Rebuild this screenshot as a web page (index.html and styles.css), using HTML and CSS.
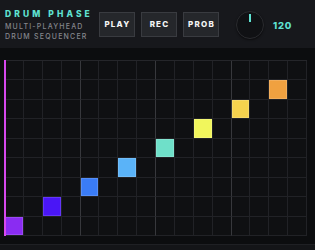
FILE: index.html
```html
<!DOCTYPE html>
<html>
  <head>
    <meta charset="utf-8" />
    <title>Drum Phase – Multi-playhead drum sequencer</title>
    <link rel="stylesheet" href="styles.css">
  </head>

  <body>
    <header class="topbar">
      <div class="brand">
        <h1 class="brand-title">DRUM PHASE</h1>
        <p class="brand-sub">MULTI-PLAYHEAD<br />DRUM SEQUENCER</p>
      </div>

      <nav class="transport">
        <button class="btn">PLAY</button>
        <button class="btn">REC</button>
        <button class="btn">PROB</button>
      </nav>

      <div class="tempo">
        <div class="knob"><span class="knob-mark"></span></div>
        <span class="bpm">120</span>
      </div>
    </header>

    <main class="stage">
      <div class="grid" id="grid">
        <span class="playhead"></span>
      </div>
    </main>

    <footer class="bottombar"></footer>

    <script src="sequencer.js"></script>
  </body>
</html>
```

FILE: styles.css
```css
html,
body {
  margin: 0;
  height: 100%;
  background: #0c0d0f;
  font-family: Inter, "DejaVu Sans", sans-serif;
}

body {
  display: flex;
  flex-direction: column;
}

.topbar {
  height: 48px;
  flex: none;
  display: flex;
  align-items: center;
  background: #17181c;
}

.brand {
  padding: 2px 0 0 5px;
  width: 94px;
}
.brand-title {
  margin: 0 0 3px;
  font-size: 8.5px;
  line-height: 10px;
  font-weight: 800;
  letter-spacing: 3.1px;
  color: #5fe2d2;
}
.brand-sub {
  margin: 0;
  font-size: 7px;
  line-height: 9.5px;
  font-weight: 500;
  letter-spacing: 1.2px;
  color: #85878d;
}

.transport {
  display: flex;
  gap: 6px;
}
.btn {
  width: 36px;
  height: 25px;
  padding: 0;
  border: 1px solid #393b40;
  background: #25272b;
  color: #f4f4f4;
  font: inherit;
  font-size: 8px;
  font-weight: 800;
  letter-spacing: 1.2px;
  text-indent: 1px;
}

.tempo {
  display: flex;
  align-items: center;
  margin-left: 17px;
  margin-top: 2px;
}
.knob {
  position: relative;
  width: 28px;
  height: 28px;
  box-sizing: border-box;
  border-radius: 50%;
  border: 1.5px solid #2a2b2f;
  background: #101114;
  box-shadow: 0 1px 2px rgba(0, 0, 0, 0.5);
}
.knob-mark {
  position: absolute;
  left: 11.5px;
  top: 1.5px;
  width: 2px;
  height: 8px;
  background: #5fe2d2;
}
.bpm {
  margin-left: 9px;
  font-size: 9.5px;
  font-weight: 800;
  letter-spacing: 0.7px;
  color: #5fe2d2;
}

.stage {
  flex: 1;
  padding: 12px 0 0 4px;
}

.grid {
  position: relative;
  width: 303px;
  height: 176px;
  box-sizing: border-box;
  display: grid;
  grid-template-columns: repeat(16, 1fr);
  grid-template-rows: repeat(9, 1fr);
  border-left: 1px solid #25262a;
  border-top: 1px solid #25262a;
  background: #0f1012;
}
.cell {
  border-right: 1px solid #212226;
  border-bottom: 1px solid #212226;
}
.cell.bar {
  border-right-color: #37383c;
}
.cell.on {
  box-shadow: inset 0 0 0 1px rgba(255, 255, 255, 0.14);
}

.playhead {
  position: absolute;
  left: -1px;
  top: -1px;
  bottom: 0;
  width: 2px;
  background: #d748ee;
}

.bottombar {
  height: 5px;
  flex: none;
  border-top: 1px solid #1f2024;
  background: #141518;
}
```

FILE: sequencer.js
```js
// 16 steps x 9 voices, one staircase of hits
const STEPS = 16;
const ROWS = 9;

const notes = [
  { step: 0, row: 8, color: "#8a2cf2" },
  { step: 2, row: 7, color: "#4a16f6" },
  { step: 4, row: 6, color: "#3a7cf6" },
  { step: 6, row: 5, color: "#5ab3f8" },
  { step: 8, row: 4, color: "#6fe0c9" },
  { step: 10, row: 3, color: "#f1f65c" },
  { step: 12, row: 2, color: "#f5d24e" },
  { step: 14, row: 1, color: "#f0a140" },
];

const $grid = document.getElementById("grid");

for (let row = 0; row < ROWS; row++) {
  for (let step = 0; step < STEPS; step++) {
    const $cell = document.createElement("div");
    $cell.className = "cell";
    if (step % 4 === 3 && step < STEPS - 1) $cell.classList.add("bar");

    const note = notes.find((n) => n.step === step && n.row === row);
    if (note) {
      $cell.classList.add("on");
      $cell.style.background = note.color;
    }
    $grid.insertBefore($cell, $grid.lastElementChild);
  }
}
```
